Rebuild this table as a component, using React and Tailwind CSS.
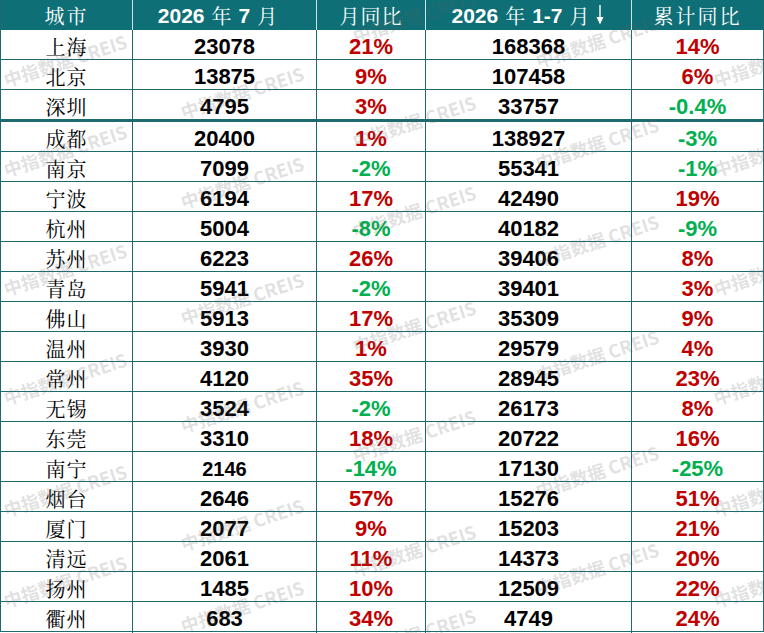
import React from "react";

const rows = [
  ["上海", "23078", "21%", "168368", "14%"],
  ["北京", "13875", "9%", "107458", "6%"],
  ["深圳", "4795", "3%", "33757", "-0.4%"],
  ["成都", "20400", "1%", "138927", "-3%"],
  ["南京", "7099", "-2%", "55341", "-1%"],
  ["宁波", "6194", "17%", "42490", "19%"],
  ["杭州", "5004", "-8%", "40182", "-9%"],
  ["苏州", "6223", "26%", "39406", "8%"],
  ["青岛", "5941", "-2%", "39401", "3%"],
  ["佛山", "5913", "17%", "35309", "9%"],
  ["温州", "3930", "1%", "29579", "4%"],
  ["常州", "4120", "35%", "28945", "23%"],
  ["无锡", "3524", "-2%", "26173", "8%"],
  ["东莞", "3310", "18%", "20722", "16%"],
  ["南宁", "2146", "-14%", "17130", "-25%"],
  ["烟台", "2646", "57%", "15276", "51%"],
  ["厦门", "2077", "9%", "15203", "21%"],
  ["清远", "2061", "11%", "14373", "20%"],
  ["扬州", "1485", "10%", "12509", "22%"],
  ["衢州", "683", "34%", "4749", "24%"],
];

const marks = [
  [65, 60], [65, 150], [65, 269], [65, 378], [65, 490], [65, 581],
  [242, 92], [242, 182], [242, 298], [242, 406], [242, 524], [242, 606],
  [414, 16], [414, 121], [414, 211], [414, 326], [414, 435], [414, 550], [414, 634],
  [597, 41], [597, 143], [597, 240], [597, 355], [597, 471], [597, 568],
  [775, 60], [775, 150], [775, 269], [775, 378], [775, 490], [775, 581],
];

const cjk = "font-['Noto_Serif_CJK_SC','Noto_Sans_CJK_SC',serif]";
const num = "font-['Liberation_Sans',Arial,sans-serif] font-bold";

function Pct({ v }) {
  const neg = v.startsWith("-");
  return (
    <span className={`${num} text-[22px] ${neg ? "text-[#00b050]" : "text-[#c00000]"}`}>{v}</span>
  );
}

function Arrow() {
  return (
    <svg width="8" height="20" viewBox="0 0 8 20" className="inline-block ml-[6px] mb-[2px]">
      <rect x="3.3" y="0" width="1.4" height="13" fill="white" />
      <polygon points="0.5,12 7.5,12 4,19.5" fill="white" />
    </svg>
  );
}

export default function App() {
  return (
    <div className="relative w-[764px] h-[633px] bg-white overflow-hidden">
      <div className="w-[764px] border-x border-[#1d6a71]">
        <div className="grid grid-cols-[132px_184px_109px_206px_131px] h-[30px] bg-[#0e6f76] text-white">
          <div className={`flex items-center justify-center border-r border-[#cfe3e4] ${cjk} text-[20px] tracking-[2px]`}>城市</div>
          <div className="flex items-center justify-center border-r border-[#cfe3e4] pr-[14px]">
            <span className={`${num} text-[21px]`}>2026</span>
            <span className={`${cjk} text-[20px] mx-[7px]`}>年</span>
            <span className={`${num} text-[21px]`}>7</span>
            <span className={`${cjk} text-[20px] ml-[7px]`}>月</span>
          </div>
          <div className={`flex items-center justify-center border-r border-[#cfe3e4] ${cjk} text-[20px] tracking-[1px]`}>月同比</div>
          <div className="flex items-center justify-center border-r border-[#cfe3e4] pr-[2px]">
            <span className={`${num} text-[21px]`}>2026</span>
            <span className={`${cjk} text-[20px] mx-[7px]`}>年</span>
            <span className={`${num} text-[21px]`}>1-7</span>
            <span className={`${cjk} text-[20px] ml-[7px]`}>月</span>
            <Arrow />
          </div>
          <div className={`flex items-center justify-center ${cjk} text-[20px] tracking-[2px]`}>累计同比</div>
        </div>
        {rows.map((r, i) => (
          <div
            key={r[0]}
            className={`grid grid-cols-[132px_184px_109px_206px_131px] border-[#1d6a71] ${
              i === 2 ? "h-[32px] border-b-[3px]" : "h-[30px] border-b"
            }`}
          >
            <div className={`flex items-center justify-center border-r border-[#1d6a71] ${cjk} text-[20px] tracking-[1px] text-black`}>
              {r[0]}
            </div>
            <div className="flex items-center justify-center border-r border-[#1d6a71]">
              <span className={`${num} ${r[1] === "2146" ? "text-[20px]" : "text-[22px]"} text-black`}>{r[1]}</span>
            </div>
            <div className="flex items-center justify-center border-r border-[#1d6a71]">
              <Pct v={r[2]} />
            </div>
            <div className="flex items-center justify-center border-r border-[#1d6a71]">
              <span className={`${num} text-[22px] text-black`}>{r[3]}</span>
            </div>
            <div className="flex items-center justify-center">
              <Pct v={r[4]} />
            </div>
          </div>
        ))}
      </div>
      <div className="absolute inset-0 pointer-events-none">
        {marks.map(([x, y], i) => (
          <div
            key={i}
            className="absolute w-[150px] h-[26px] leading-[26px] text-center whitespace-nowrap -rotate-[18deg] text-[18px] font-bold text-[rgba(100,100,100,0.2)] font-['Noto_Sans_CJK_SC','Liberation_Sans',sans-serif]"
            style={{ left: x - 75, top: y - 13 }}
          >
            中指数据 CREIS
          </div>
        ))}
      </div>
    </div>
  );
}
